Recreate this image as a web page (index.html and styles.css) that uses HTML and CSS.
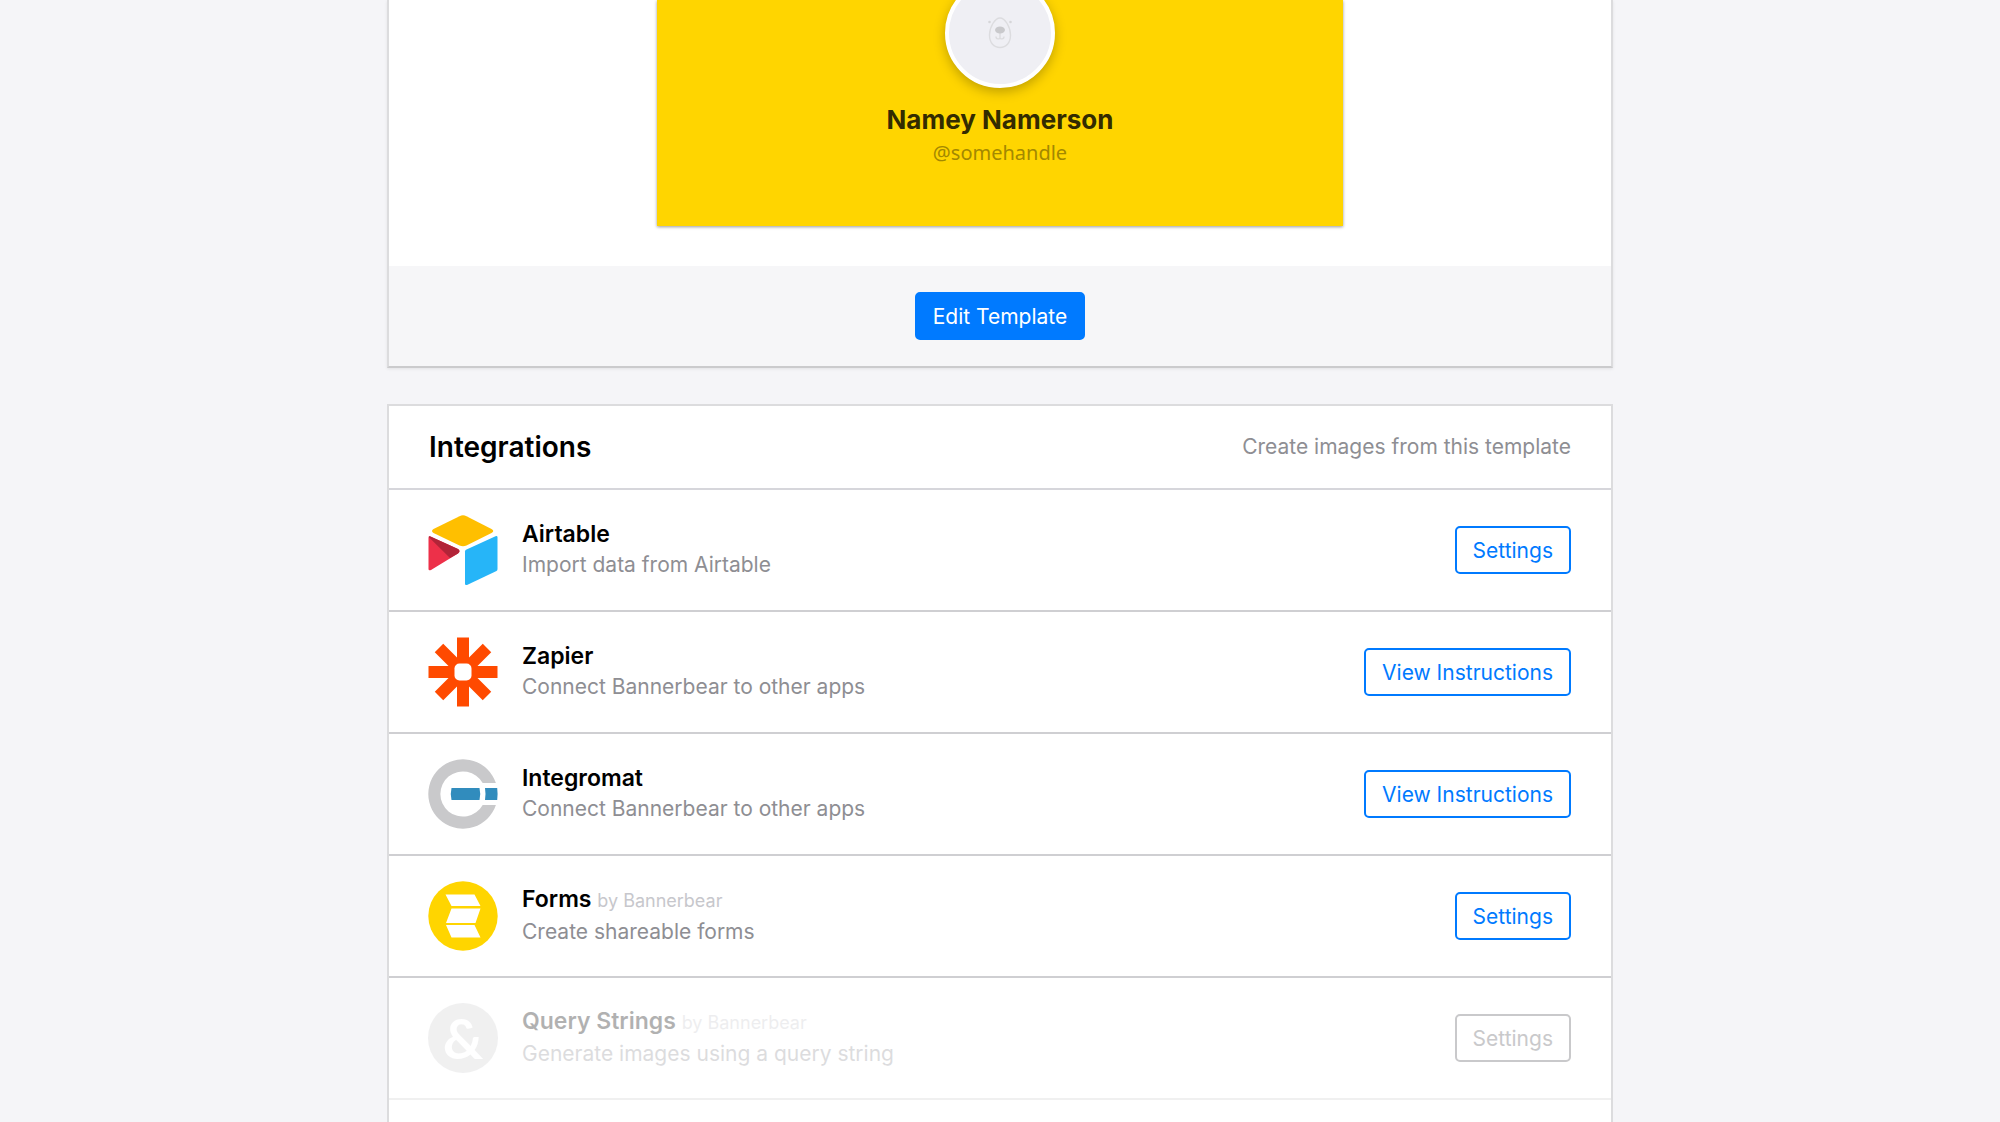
FILE: index.html
```html
<!DOCTYPE html>
<html lang="en">
<head>
    <meta charset="UTF-8">
    <meta name="viewport" content="width=device-width, initial-scale=1.0">
    <title>Template - Bannerbear</title>
    <link rel="stylesheet" href="styles.css">
</head>
<body>
    <main class="container">
        <section class="card template">
            <div class="preview">
                <div class="canvas">
                    <div class="avatar">
                        <svg class="bear" viewBox="0 0 24 32" fill="none" stroke="#dcdcdf" stroke-width="1.4">
                            <path d="M12 1C17 1 22.500 10 22.500 18C22.500 26 18 30.500 12 30.500C6 30.500 1.500 26 1.500 18C1.500 10 7 1 12 1Z"/>
                            <path d="M12 15V21M8 19.500C8 22.500 12 22.500 12 20.500C12 22.500 16 22.500 16 19.500"/>
                            <ellipse cx="12" cy="13" rx="5" ry="3.500" fill="#c9c9cc" stroke="none"/>
                            <circle cx="1.500" cy="5" r="1.300" fill="#d6d6d9" stroke="none"/>
                            <circle cx="22.500" cy="5" r="1.300" fill="#d6d6d9" stroke="none"/>
                        </svg>
                    </div>
                    <div class="name">Namey Namerson</div>
                    <div class="handle">@somehandle</div>
                </div>
            </div>
            <div class="card-footer">
                <button class="btn btn-primary">Edit Template</button>
            </div>
        </section>

        <section class="card integrations">
            <header class="card-header">
                <h2>Integrations</h2>
                <p>Create images from this template</p>
            </header>

            <div class="row">
                <svg class="logo" viewBox="0 0 70 70">
                    <path fill="#ffbf00" d="M31.500 1.200Q35 -.5 38.500 1.200L63.500 14Q67 16 63.500 18L38.500 30.500Q35 32 31.500 30.500L5.500 18Q2.500 16 5.500 14Z"/>
                    <path fill="#26b5f8" d="M37 36.500Q37 35.300 38 34.800L67.500 21.300Q69.500 20.500 69.500 22.500V54Q69.500 55.500 68.500 56L39 70Q37 70.500 37 68.500Z"/>
                    <path fill="#ed3049" d="M.5 23Q.5 20.500 2.500 21.500L30 34Q33 36 30 38.500L3 55Q.5 56 .5 54Z"/>
                    <path fill="#b22438" d="M.7 22Q1 20.800 2.500 21.500L30 34Q33 36 30 38.500L22 43Z"/>
                </svg>
                <div class="info">
                    <h3>Airtable</h3>
                    <p>Import data from Airtable</p>
                </div>
                <button class="btn">Settings</button>
            </div>

            <div class="row">
                <svg class="logo" viewBox="0 0 70 70">
                    <g stroke="#ff4a00" stroke-width="12">
                        <path d="M35 .5V69.500M.5 35H69.500M11 11L59 59M59 11L11 59"/>
                    </g>
                    <rect x="26.500" y="26.500" width="17" height="17" rx="5" fill="#fff"/>
                </svg>
                <div class="info">
                    <h3>Zapier</h3>
                    <p>Connect Bannerbear to other apps</p>
                </div>
                <button class="btn">View Instructions</button>
            </div>

            <div class="row">
                <svg class="logo" viewBox="0 0 70 70">
                    <path fill="#c9c9cb" d="M67.900 24A34.700 34.700 0 1 0 67.900 46H54.700A22.600 22.600 0 1 1 54.700 24Z"/>
                    <path fill="#318cbd" d="M23.500 29H51.500Q53 35 51.500 41H23.500Q22 35 23.500 29ZM57 29H69.200Q70 35 69.200 41H57Q58 35 57 29Z"/>
                </svg>
                <div class="info">
                    <h3>Integromat</h3>
                    <p>Connect Bannerbear to other apps</p>
                </div>
                <button class="btn">View Instructions</button>
            </div>

            <div class="row">
                <svg class="logo" viewBox="0 0 70 70">
                    <circle cx="35" cy="35" r="34.700" fill="#ffd500"/>
                    <path fill="#fff" d="M17.500 13.500H46.500L52.500 25H23.500ZM23.500 27.500H52.500L47.500 42H18ZM18 44H46.500L52.500 56.500H23.500Z"/>
                </svg>
                <div class="info">
                    <h3>Forms <small>by Bannerbear</small></h3>
                    <p>Create shareable forms</p>
                </div>
                <button class="btn">Settings</button>
            </div>

            <div class="row disabled">
                <div class="logo ampersand">&amp;</div>
                <div class="info">
                    <h3>Query Strings <small>by Bannerbear</small></h3>
                    <p>Generate images using a query string</p>
                </div>
                <button class="btn" disabled>Settings</button>
            </div>
        </section>
    </main>
</body>
</html>
```
FILE: styles.css
```css
* {
    box-sizing: border-box;
}
body {
    margin: 0;
    background-color: #f5f5f8;
    color: #000;
    font-family: Inter, sans-serif;
    font-size: 21px;
    line-height: 30px;
}
h2, h3, p {
    margin: 0;
}
.container {
    display: flex;
    flex-direction: column;
    gap: 36px;
    max-width: 1226px;
    min-height: 100vh;
    margin: 0 auto;
}
.card {
    background-color: #fff;
    border: 2px solid #dcdcde;
}
.template {
    border-top: none;
    border-bottom-color: #cbcbcd;
    box-shadow: 0 1px 3px rgba(0, 0, 0, 0.08);
}
.preview {
    padding-bottom: 40px;
}
.canvas {
    display: flex;
    flex-direction: column;
    align-items: center;
    max-width: 686px;
    margin: 0 auto;
    padding-bottom: 58px;
    background-color: #ffd500;
    box-shadow: 0 1px 3px rgba(0, 0, 0, 0.4);
}
.avatar {
    display: flex;
    align-items: center;
    justify-content: center;
    width: 110px;
    height: 110px;
    margin-top: -22px;
    margin-bottom: 14px;
    border: 4px solid #fff;
    border-radius: 50%;
    background-color: #efeff4;
    box-shadow: 0 4px 12px rgba(0, 0, 0, 0.25);
}
.bear {
    width: 24px;
    height: 32px;
    overflow: visible;
}
.name {
    color: #332b00;
    font-size: 26px;
    font-weight: 700;
    line-height: 36px;
}
.handle {
    color: #a38800;
    font-family: "Noto Sans", sans-serif;
    font-size: 20px;
}
.card-footer {
    display: flex;
    justify-content: center;
    padding: 26px;
    background-color: #f6f6f8;
}
.btn {
    height: 48px;
    padding: 0 16px;
    border: 2px solid #007aff;
    border-radius: 5px;
    background-color: #fff;
    color: #007aff;
    font-family: inherit;
    font-size: 21px;
    white-space: nowrap;
    cursor: pointer;
}
.btn-primary {
    background-color: #007aff;
    color: #fff;
}
.btn:disabled {
    border-color: #c9c9cb;
    color: #c9c9cb;
    cursor: default;
}
.integrations {
    flex: 1;
    border-bottom: none;
}
.card-header {
    display: flex;
    align-items: center;
    justify-content: space-between;
    height: 84px;
    padding: 0 40px;
    border-bottom: 2px solid #d6d6db;
}
.card-header h2 {
    font-size: 28px;
    font-weight: 600;
}
p {
    color: #8e8e93;
}
.row {
    display: flex;
    align-items: center;
    height: 122px;
    padding: 0 40px 0 39px;
    border-bottom: 2px solid #cfcfd2;
}
.logo {
    flex: none;
    width: 70px;
    height: 70px;
    margin-right: 24px;
}
.info {
    flex: 1;
    padding-bottom: 3px;
}
h3 {
    font-size: 23px;
    font-weight: 600;
    line-height: 32px;
}
small {
    color: #c7c7cc;
    font-size: 18px;
    font-weight: 400;
}
.ampersand {
    border-radius: 50%;
    background-color: #cfcfd1;
    color: #fff;
    font-family: Lato, sans-serif;
    font-size: 56px;
    font-weight: 700;
    line-height: 70px;
    text-align: center;
}
.disabled {
    border-bottom-color: #f0f0f0;
}
.disabled .logo,
.disabled .info {
    opacity: 0.3;
}
```
